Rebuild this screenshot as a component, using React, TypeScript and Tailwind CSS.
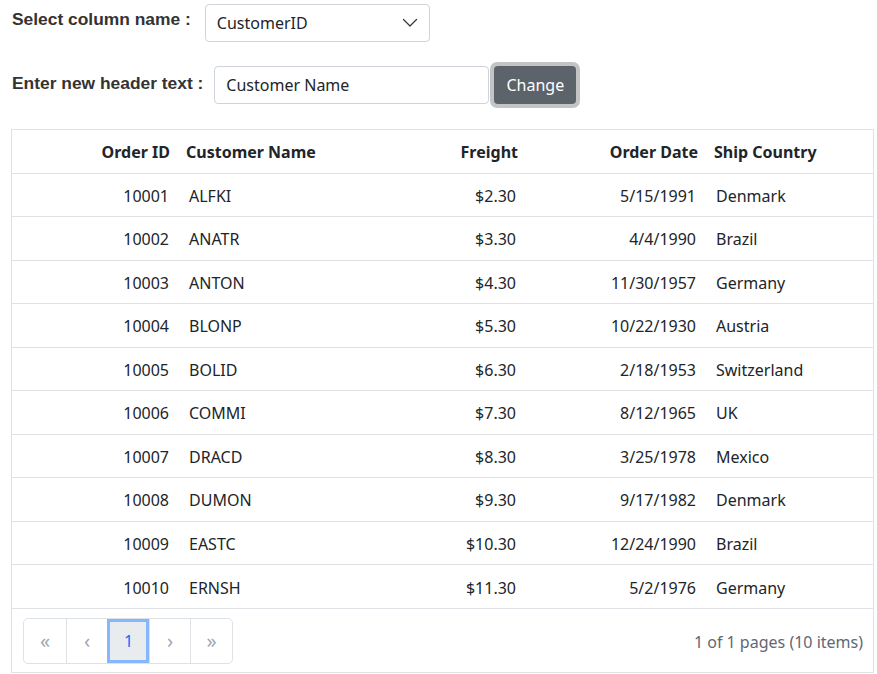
import React from "react";

const rows = [
  ["10001", "ALFKI", "$2.30", "5/15/1991", "Denmark"],
  ["10002", "ANATR", "$3.30", "4/4/1990", "Brazil"],
  ["10003", "ANTON", "$4.30", "11/30/1957", "Germany"],
  ["10004", "BLONP", "$5.30", "10/22/1930", "Austria"],
  ["10005", "BOLID", "$6.30", "2/18/1953", "Switzerland"],
  ["10006", "COMMI", "$7.30", "8/12/1965", "UK"],
  ["10007", "DRACD", "$8.30", "3/25/1978", "Mexico"],
  ["10008", "DUMON", "$9.30", "9/17/1982", "Denmark"],
  ["10009", "EASTC", "$10.30", "12/24/1990", "Brazil"],
  ["10010", "ERNSH", "$11.30", "5/2/1976", "Germany"],
];

const ui = { fontFamily: '"Noto Sans", "Open Sans", sans-serif' };
const lab = { fontFamily: '"Liberation Sans", Arial, sans-serif' };

export default function App() {
  return (
    <div className="w-[877px] h-[674px] bg-white text-[#212529] overflow-hidden" style={ui}>
      <div className="flex items-start pl-[12px] pt-[4px]">
        <div className="text-[17.4px] font-bold text-[#333] pt-[3px] leading-[24px]" style={lab}>Select column name :</div>
        <div className="ml-[14px] w-[225px] h-[38px] border border-[#ced4da] rounded-[4px] flex items-center justify-between pl-[11px] pr-[11px] text-[16px]">
          <span>CustomerID</span>
          <svg width="16" height="10" viewBox="0 0 16 10" fill="none">
            <path d="M1.5 1.5 L8 8 L14.5 1.5" stroke="#343a40" strokeWidth="1.3" strokeLinecap="round" strokeLinejoin="round" />
          </svg>
        </div>
      </div>
      <div className="flex items-start pl-[12px] pt-[20px]">
        <div className="text-[17.4px] font-bold text-[#333] pt-[9px] leading-[24px]" style={lab}>Enter new header text :</div>
        <div className="ml-[11px] mt-[4px] w-[275px] h-[38px] border border-[#ced4da] rounded-[4px] flex items-center pl-[11px] text-[16px]">
          Customer Name
        </div>
        <div className="ml-[1px] p-[4px] rounded-[7px] bg-[#c2c4c6]">
          <div className="w-[82px] h-[38px] rounded-[4px] bg-[#5c636a] text-white text-[16px] flex items-center justify-center">Change</div>
        </div>
      </div>
      <div className="ml-[11px] mt-[21px] w-[863px] border border-[#dee2e6]">
        <table className="w-full table-fixed border-collapse text-[16px]">
          <colgroup>
            <col className="w-[166px]" />
            <col className="w-[174px]" />
            <col className="w-[174px]" />
            <col className="w-[180px]" />
            <col />
          </colgroup>
          <thead>
            <tr className="h-[43px]">
              <th className="text-right px-[8px] pt-[2px] font-bold leading-[20px]">Order ID</th>
              <th className="text-left px-[8px] pt-[2px] font-bold leading-[20px]">Customer Name</th>
              <th className="text-right px-[8px] pt-[2px] font-bold leading-[20px]">Freight</th>
              <th className="text-right px-[8px] pt-[2px] font-bold leading-[20px]">Order Date</th>
              <th className="text-left px-[8px] pt-[2px] font-bold leading-[20px]">Ship Country</th>
            </tr>
          </thead>
          <tbody>
            {rows.map((r) => (
              <tr key={r[0]} className="h-[43.5px] border-t border-[#dee2e6]">
                <td className="text-right px-[9px] pt-[2px] leading-[20px]">{r[0]}</td>
                <td className="text-left px-[11px] pt-[2px] leading-[20px]">{r[1]}</td>
                <td className="text-right px-[10px] pt-[2px] leading-[20px]">{r[2]}</td>
                <td className="text-right px-[10px] pt-[2px] leading-[20px]">{r[3]}</td>
                <td className="text-left px-[10px] pt-[2px] leading-[20px]">{r[4]}</td>
              </tr>
            ))}
          </tbody>
        </table>
        <div className="border-t border-[#dee2e6] h-[64px] flex items-center justify-between pl-[11px] pr-[10px]">
          <div className="flex h-[46px] border border-[#dee2e6] rounded-[5px] overflow-hidden text-[#a0a8b1] text-[16px]">
            <div className="w-[42px] flex items-center justify-center text-[20px]">«</div>
            <div className="w-[41px] flex items-center justify-center border-l border-[#dee2e6] text-[20px]">‹</div>
            <div className="w-[42px] flex items-center justify-center border-l border-[#dee2e6] bg-[#e9ecef] text-[#0d6efd] outline-[3px] outline-[#86b7fe] -outline-offset-[3px]">1</div>
            <div className="w-[41px] flex items-center justify-center border-l border-[#dee2e6] text-[20px]">›</div>
            <div className="w-[42px] flex items-center justify-center border-l border-[#dee2e6] text-[20px]">»</div>
          </div>
          <div className="text-[16px] text-[#5f6873] pt-[2px]">1 of 1 pages (10 items)</div>
        </div>
      </div>
    </div>
  );
}
